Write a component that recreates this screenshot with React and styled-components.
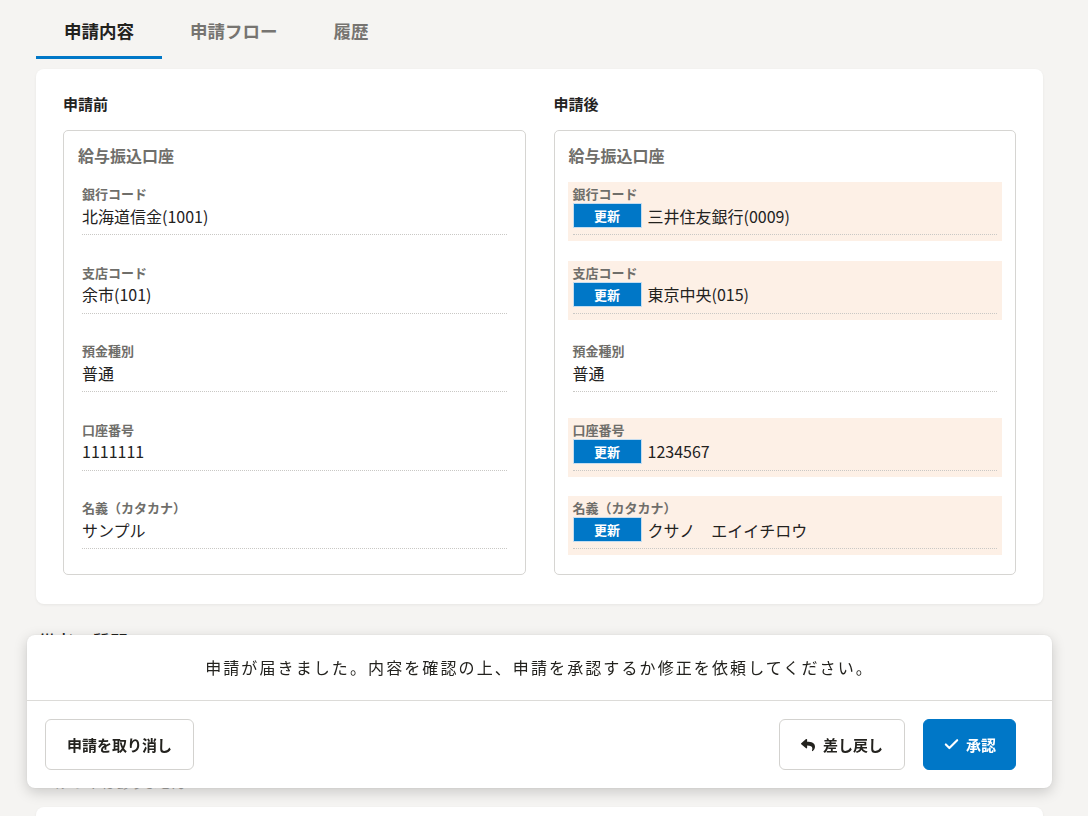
import React from "react";
import styled, { createGlobalStyle } from "styled-components";
import { FaReply } from "react-icons/fa";
import { Check } from "lucide-react";

const GlobalStyle = createGlobalStyle`
  * { box-sizing: border-box; }
  html, body { margin: 0; padding: 0; }
  body {
    background: #f5f4f2;
    font-family: "Noto Sans CJK JP", "Noto Sans", sans-serif;
    color: #23221e;
  }
`;

const Page = styled.div`
  padding: 0 45px 0 36px;
  min-height: 1100px;
`;

const TabBar = styled.nav`
  display: flex;
  height: 59px;
`;

const Tab = styled.div`
  height: 59px;
  padding: 5px 28px 0;
  display: flex;
  align-items: center;
  font-size: 17.5px;
  font-weight: 700;
  color: ${(p) => (p.$active ? "#23221e" : "#767471")};
  border-bottom: 3px solid ${(p) => (p.$active ? "#0077c7" : "transparent")};
`;

const Card = styled.section`
  margin-top: 10px;
  background: #fff;
  border-radius: 8px;
  box-shadow: 0 1px 3px rgba(0, 0, 0, 0.06);
  padding: 24px 27px 29px;
  display: grid;
  grid-template-columns: 1fr 1fr;
  column-gap: 28px;
`;

const Column = styled.div`
  display: flex;
  flex-direction: column;
`;

const ColumnTitle = styled.h3`
  margin: 0 0 15px;
  font-size: 15px;
  line-height: 21px;
  font-weight: 700;
`;

const Box = styled.div`
  margin-top: 1px;
  border: 1px solid #d6d5d2;
  border-radius: 5px;
  padding: 13px 13px 19px;
`;

const BoxTitle = styled.h4`
  margin: 0 0 15px 1px;
  font-size: 16px;
  line-height: 23px;
  font-weight: 700;
  color: #6f6e6a;
`;

const Rows = styled.div`
  display: flex;
  flex-direction: column;
  gap: 19.5px;
  margin-top: 1px;
`;

const Row = styled.div`
  padding: 2px 5px 6px;
  background: ${(p) => (p.$changed ? "#fdf0e6" : "transparent")};
`;

const RowInner = styled.div`
  padding-bottom: 6px;
  border-bottom: 1px dotted #c9c8c5;
`;

const Label = styled.div`
  font-size: 13px;
  line-height: 19px;
  font-weight: 700;
  color: #6f6e6a;
`;

const ValueLine = styled.div`
  display: flex;
  align-items: center;
  gap: 6px;
  min-height: 25px;
  font-size: 16px;
  line-height: 24px;
  color: #23221e;
  white-space: pre;
`;

const Badge = styled.span`
  width: 69px;
  height: 25px;
  display: inline-flex;
  align-items: center;
  justify-content: center;
  background: #0077c7;
  border: 1px solid #c4dcef;
  color: #fff;
  font-size: 13px;
  font-weight: 700;
  line-height: 1;
`;

const SectionHeading = styled.h2`
  margin: 24px 0 0 2px;
  font-size: 18px;
  line-height: 26px;
  font-weight: 500;
  color: #23221e;
`;

const NoteText = styled.p`
  margin: 118px 0 0 10px;
  font-size: 14px;
  line-height: 20px;
  color: #a3a29e;
`;

const LowerCard = styled.section`
  margin-top: 15px;
  background: #fff;
  border-radius: 8px;
  height: 200px;
  box-shadow: 0 1px 3px rgba(0, 0, 0, 0.06);
`;

const ActionBar = styled.div`
  position: fixed;
  left: 27px;
  right: 36px;
  bottom: 28px;
  background: #fff;
  border-radius: 8px;
  box-shadow: 0 4px 14px rgba(0, 0, 0, 0.18), 0 0 2px rgba(0, 0, 0, 0.08);
`;

const Message = styled.p`
  margin: 0;
  padding: 20px 0;
  text-align: center;
  font-size: 16px;
  line-height: 25px;
  letter-spacing: 2.1px;
  color: #23221e;
`;

const Footer = styled.div`
  border-top: 1px solid #dcdbd8;
  padding: 18px 36px 18px 18px;
  display: flex;
  justify-content: space-between;
  align-items: center;
`;

const ButtonGroup = styled.div`
  display: flex;
  gap: 18px;
`;

const Button = styled.button`
  height: 51px;
  padding: 0 ${(p) => (p.$primary ? "19px" : "21px")};
  display: inline-flex;
  align-items: center;
  gap: ${(p) => (p.$primary ? "6px" : "8px")};
  border-radius: 6px;
  border: 1px solid ${(p) => (p.$primary ? "#0077c7" : "#d3d2cf")};
  background: ${(p) => (p.$primary ? "#0077c7" : "#fff")};
  color: ${(p) => (p.$primary ? "#fff" : "#23221e")};
  font-family: inherit;
  font-size: 15px;
  font-weight: 700;
  line-height: 1;
  cursor: pointer;
`;

const before = [
  { label: "銀行コード", value: "北海道信金(1001)" },
  { label: "支店コード", value: "余市(101)" },
  { label: "預金種別", value: "普通" },
  { label: "口座番号", value: "1111111" },
  { label: "名義（カタカナ）", value: "サンプル" },
];

const after = [
  { label: "銀行コード", value: "三井住友銀行(0009)", changed: true },
  { label: "支店コード", value: "東京中央(015)", changed: true },
  { label: "預金種別", value: "普通" },
  { label: "口座番号", value: "1234567", changed: true },
  { label: "名義（カタカナ）", value: "クサノ　エイイチロウ", changed: true },
];

function Panel({ title, rows }) {
  return (
    <Column>
      <ColumnTitle>{title}</ColumnTitle>
      <Box>
        <BoxTitle>給与振込口座</BoxTitle>
        <Rows>
          {rows.map((r) => (
            <Row key={r.label} $changed={r.changed}>
              <RowInner>
                <Label>{r.label}</Label>
                <ValueLine>
                  {r.changed && <Badge>更新</Badge>}
                  {r.value}
                </ValueLine>
              </RowInner>
            </Row>
          ))}
        </Rows>
      </Box>
    </Column>
  );
}

export default function App() {
  return (
    <>
      <GlobalStyle />
      <Page>
        <TabBar>
          <Tab $active>申請内容</Tab>
          <Tab>申請フロー</Tab>
          <Tab>履歴</Tab>
        </TabBar>
        <Card>
          <Panel title="申請前" rows={before} />
          <Panel title="申請後" rows={after} />
        </Card>
        <SectionHeading>備考・質問</SectionHeading>
        <NoteText>コメントはありません</NoteText>
        <LowerCard />
      </Page>
      <ActionBar>
        <Message>
          申請が届きました。内容を確認の上、申請を承認するか修正を依頼してください。
        </Message>
        <Footer>
          <Button>申請を取り消し</Button>
          <ButtonGroup>
            <Button>
              <FaReply size={14} />
              差し戻し
            </Button>
            <Button $primary>
              <Check size={17} strokeWidth={3} />
              承認
            </Button>
          </ButtonGroup>
        </Footer>
      </ActionBar>
    </>
  );
}
